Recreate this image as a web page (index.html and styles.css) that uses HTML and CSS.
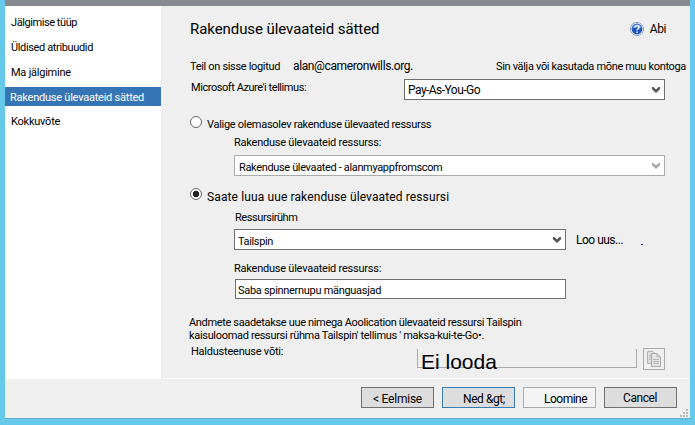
FILE: index.html
```html
<!DOCTYPE html>
<html lang="et">
<head>
<meta charset="utf-8">
<title>Rakenduse ülevaateid sätted</title>
<link rel="stylesheet" href="styles.css">
</head>
<body>
<div class="window">
  <div class="body">
    <nav class="steps">
      <div class="step s1">Jälgimise tüüp</div>
      <div class="step s2">Üldised atribuudid</div>
      <div class="step s3">Ma jälgimine</div>
      <div class="step active">Rakenduse ülevaateid sätted</div>
      <div class="step s5">Kokkuvõte</div>
    </nav>
    <main class="main">
      <header class="head">
        <h1>Rakenduse ülevaateid sätted</h1>
        <div class="help">
          <svg width="14" height="14" viewBox="0 0 14 14"><circle cx="7" cy="7" r="6.5" fill="#fff" stroke="#7d9ccc"/><circle cx="7" cy="7" r="5.4" fill="#1d55bd"/><path d="M2.2 6.2a4.9 4.9 0 0 1 9.6 0Q7 4.8 2.2 6.2z" fill="#5f92e2"/><path d="M5 5.5Q5.1 3.6 7.1 3.6T9.1 5.2Q9.1 6.1 8 6.8Q7.1 7.4 7.1 8.3M7.1 9.6V11" fill="none" stroke="#fff" stroke-width="1.4"/></svg>
          <span>Abi</span>
        </div>
      </header>
      <div class="account">
        <span class="signed">Teil on sisse logitud</span>
        <span class="email">alan@cameronwills.org.</span>
        <span class="switch">Sin välja või kasutada mõne muu kontoga</span>
      </div>
      <div class="subscription">
        <label>Microsoft Azure'i tellimus:</label>
        <div class="combo"><span class="plan">Pay-As-You-Go</span><svg class="chev" width="8" height="6" viewBox="0 0 8 6"><path d="M0 0H1.5L4 2.5L6.5 0H8V2.2L4 6L0 2.2z"/></svg></div>
      </div>
      <div class="choice existing"><i class="radio"></i><span>Valige olemasolev rakenduse ülevaated ressurss</span></div>
      <div class="group">
        <label class="resource">Rakenduse ülevaateid ressurss:</label>
        <div class="combo disabled"><span>Rakenduse ülevaated - alanmyappfromscom</span><svg class="chev" width="8" height="6" viewBox="0 0 8 6"><path d="M0 0H1.5L4 2.5L6.5 0H8V2.2L4 6L0 2.2z"/></svg></div>
      </div>
      <div class="choice create"><i class="radio on"></i><span>Saate luua uue rakenduse ülevaated ressursi</span></div>
      <div class="group second">
        <label class="rg">Ressursirühm</label>
        <div class="pick">
          <div class="combo"><span class="rgname">Tailspin</span><svg class="chev" width="8" height="6" viewBox="0 0 8 6"><path d="M0 0H1.5L4 2.5L6.5 0H8V2.2L4 6L0 2.2z"/></svg></div>
          <span class="new">Loo uus...</span><i class="tick"></i>
        </div>
        <label class="resource">Rakenduse ülevaateid ressurss:</label>
        <div class="field"><span>Saba spinnernupu mänguasjad</span></div>
      </div>
      <p class="note"><span class="n1">Andmete saadetakse uue nimega Aoolication ülevaateid ressursi Tailspin</span><span class="n2">kaisuloomad ressursi rühma Tailspin' tellimus ' maksa-kui-te-Go•.</span></p>
      <div class="key">
        <label>Haldusteenuse võti:</label>
        <div class="keybox"><span>Ei looda</span></div>
        <div class="copy"><svg width="16" height="18" viewBox="0 0 16 18"><path d="M1.5 1.5H7L9.5 4V13.5H1.5z" fill="#dedede" stroke="#b0b0b0"/><path d="M3 5.5H5M3 7.5H5M3 9.5H5" stroke="#bbb"/><path d="M5.5 3.5H11L14.5 7V16.5H5.5z" fill="#e4e4e4" stroke="#aaa"/><path d="M11 3.5V7H14.5M7 9.5H13M7 11.5H13M7 13.500H13" fill="none" stroke="#b4b4b4"/></svg></div>
      </div>
      <div class="rule"></div>
    </main>
  </div>
  <footer class="footer">
    <div class="btn"><span class="b1">&lt; Eelmise</span></div>
    <div class="btn primary"><span class="b2">Ned &amp;gt;</span></div>
    <div class="btn off"><span class="b3">Loomine</span></div>
    <div class="btn"><span class="b4">Cancel</span></div>
    <svg class="grip" width="9" height="9" viewBox="0 0 9 9" fill="#b8b8b8"><path d="M6 0h2v2H6zM3 3h2v2H3zM6 3h2v2H6zM0 6h2v2H0zM3 6h2v2H3zM6 6h2v2H6z"/></svg>
  </footer>
</div>
</body>
</html>
```
FILE: styles.css
```css
* { box-sizing: border-box; }
body {
  margin: 0;
  font: 11px/14px Roboto, "Liberation Sans", sans-serif;
  letter-spacing: -0.23px;
  color: #000;
  white-space: nowrap;
}
.window {
  width: 695px;
  height: 425px;
  display: flex;
  flex-direction: column;
  border: 5px solid #66c9e9;
  border-top: 0;
  border-bottom-width: 6px;
  background: #efefef;
  overflow: hidden;
}
.window::before {
  content: "";
  flex: none;
  height: 6px;
  background: #868a8e;
}
.body { display: flex; height: 373px; flex: none; }
.steps { width: 156px; background: #fff; padding: 10px 0 0; flex: none; }
.step { height: 14px; padding-left: 6px; margin-bottom: 11px; }
.s1 { letter-spacing: -0.43px; }
.s2 { letter-spacing: -0.36px; }
.s3 { margin-bottom: 7px; }
.active {
  height: 19px;
  line-height: 22px;
  padding-left: 5px;
  margin-bottom: 9px;
  background: #3575b5;
  color: #fff;
}
.main { flex: 1; padding-left: 28px; display: flex; flex-direction: column; }
.head { height: 51px; display: flex; justify-content: space-between; padding: 14px 24px 0 1px; flex: none; }
h1 { margin: 0; font-size: 15px; font-weight: 400; line-height: 18px; letter-spacing: -0.07px; }
.help { display: flex; gap: 6px; padding-top: 2px; font-size: 12px; letter-spacing: -0.45px; }
.account { display: flex; height: 22px; padding: 3px 0 0 1px; flex: none; }
.signed { width: 103px; letter-spacing: -0.33px; }
.email { width: 203px; margin-top: -1px; font-size: 12px; letter-spacing: -0.38px; }
.switch { letter-spacing: -0.33px; }
.subscription { display: flex; justify-content: space-between; padding: 0 25px 0 2px; height: 21px; flex: none; }
.subscription label { padding-top: 2px; letter-spacing: -0.44px; }
.combo, .field {
  display: flex;
  justify-content: space-between;
  align-items: center;
  width: 261px;
  height: 21px;
  padding: 0 4px 0 3px;
  border: 1px solid #6f6f6f;
  background: #fff;
}
.chev { fill: #555; flex: none; }
.plan { padding-top: 1px; font-size: 12px; letter-spacing: -0.53px; }
.choice { display: flex; height: 16px; margin-top: 16px; gap: 5px; padding-left: 1px; flex: none; }
.existing span { padding-top: 2px; letter-spacing: -0.28px; }
.radio { width: 12px; height: 12px; flex: none; border: 1px solid #666; border-radius: 50%; background: #fff; }
.on { background: radial-gradient(circle, #222 3px, #fff 3.6px); }
.group { padding-left: 45px; display: flex; flex-direction: column; margin-top: 4px; flex: none; }
.group .combo { margin-top: 5px; }
.group .disabled { width: 431px; border-color: #a8acae; }
.disabled span { padding: 4px 0 0 1px; letter-spacing: -0.35px; }
.disabled .chev { fill: #aaa; }
.create { margin-top: 12px; }
.create span { padding-top: 2px; font-size: 12px; letter-spacing: 0.12px; }
.second { margin-top: 7px; }
.rg { padding-left: 1px; letter-spacing: -0.43px; }
.pick { display: flex; margin-bottom: 12px; padding-top: 4px; }
.group .pick .combo { width: 332px; margin-top: 0; }
.rgname { padding-top: 4px; letter-spacing: -0.36px; }
.new { padding: 4px 0 0 10px; font-size: 12px; letter-spacing: -0.5px; }
.tick { width: 2px; height: 1px; margin: 15px 0 0 18px; background: #22c; }
.group .field { margin: 3px 0 0 1px; width: 331px; height: 20px; padding-left: 2px; }
.field span { padding-top: 3px; letter-spacing: -0.3px; }
.note { margin: 17px 0 0; line-height: 13px; letter-spacing: -0.34px; }
.n1, .n2 { display: block; }
.n2 { letter-spacing: -0.32px; }
.key { display: flex; height: 27px; margin-top: 1px; padding-left: 2px; flex: none; }
.key label { width: 226px; padding-top: 2px; }
.keybox { width: 220px; height: 19px; margin-top: 6px; border: 1px solid #a8acae; border-top: 0; }
.keybox span { display: block; padding-left: 3px; font: 21px/25px "Liberation Sans", Arial, sans-serif; letter-spacing: 0; }
.copy { width: 22px; height: 22px; margin: 5px 0 0 6px; padding: 1px 2px; border: 1px solid #a8acae; }
.rule { height: 1px; margin: auto 1px 0 2px; margin-left: -26px; background: #fff; flex: none; }
.footer { position: relative; display: flex; flex: 1; justify-content: flex-end; gap: 8px; padding: 8px 13px 0 0; border-bottom: 1px solid #65aeca; }
.btn { width: 73px; height: 21px; border: 1px solid #6f6f6f; background: #ddd; font-size: 12px; line-height: 22px; }
.btn span { display: block; }
.primary { border-color: #3a7db5; }
.off { border-color: #a8acae; background: #f3f3f3; }
.b1 { padding-left: 11px; }
.b2 { padding-left: 20px; letter-spacing: -0.42px; }
.b3 { padding-left: 20px; letter-spacing: -0.5px; }
.b4 { padding-left: 18px; line-height: 20px; letter-spacing: -0.42px; }
.grip { position: absolute; right: 1px; bottom: 0; }
```
